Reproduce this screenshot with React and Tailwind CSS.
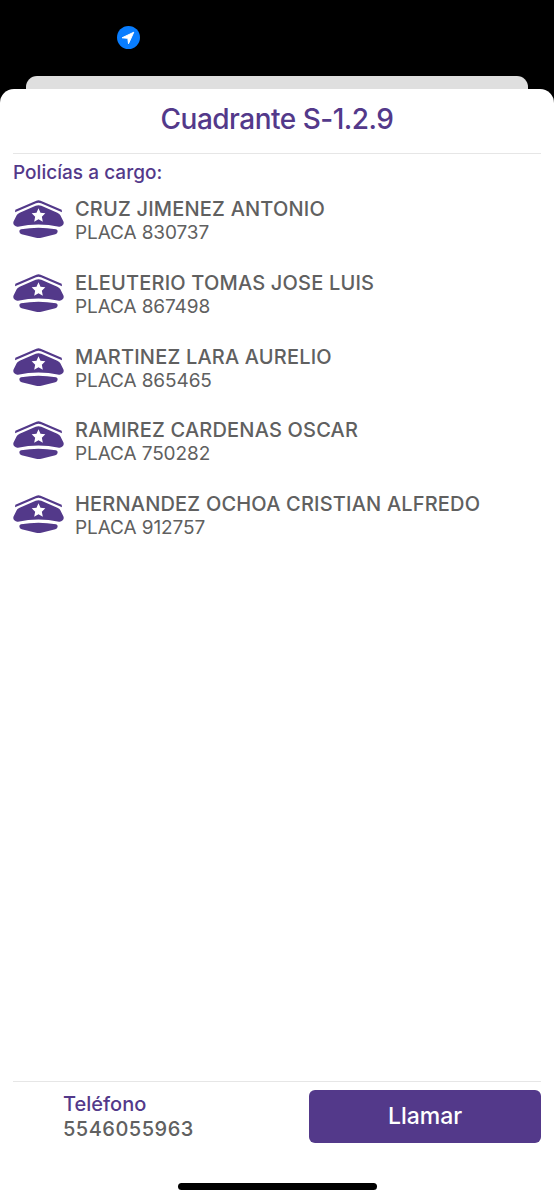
import React from 'react';

const officers = [
    { name: 'CRUZ JIMENEZ ANTONIO', badge: '830737' },
    { name: 'ELEUTERIO TOMAS JOSE LUIS', badge: '867498' },
    { name: 'MARTINEZ LARA AURELIO', badge: '865465' },
    { name: 'RAMIREZ CARDENAS OSCAR', badge: '750282' },
    { name: 'HERNANDEZ OCHOA CRISTIAN ALFREDO', badge: '912757' },
];

const PoliceCap = () => (
    <svg viewBox="0 0 153 114" className="w-[51px] h-[38px] shrink-0" fill="#53398a" aria-hidden="true">
        <path d="M6 37 L7 29 L70 2 Q76 -1 83 2 L146 29 L147 37 L84 10 Q76 7 69 10 Z" />
        <path d="M20 38 L68 17 Q76 14 85 17 L133 38 Q140 41 142 46 L151 64 Q154 71 149 76 Q144 81 138 80 Q76 67 15 80 Q9 81 4 76 Q-1 71 2 64 L11 46 Q13 41 20 38 Z" />
        <path d="M24 88 Q76 78 129 88 Q134 89 134 94 Q134 101 127 103 L85 113 Q77 115 69 113 L26 103 Q19 101 19 94 Q19 89 24 88 Z" />
        <path fill="#fff" d="M76.500 25 L82.500 38 L97 40 L86.500 50 L89.500 65 L76.500 58 L63.500 65 L66.500 50 L56 40 L70.500 38 Z" />
    </svg>
);

const LocationBadge = () => (
    <div className="w-[23px] h-[23px] rounded-full bg-[#087dff]">
        <svg viewBox="0 0 24 24" className="w-[23px] h-[23px]" fill="#fff" stroke="#fff" strokeWidth="1" strokeLinejoin="round" aria-hidden="true">
            <path d="M17.500 6.500 L5.300 12.300 L11.300 12.900 L12 18.500 Z" />
        </svg>
    </div>
);

const App = () => {
    return (
        <div className="w-full h-[1200px] flex flex-col bg-black overflow-hidden font-['Inter',sans-serif] text-[#606060]">
            <div className="h-[76px] shrink-0 pt-[26px] pl-[117px]">
                <LocationBadge />
            </div>

            <div className="h-[13px] shrink-0 mx-[26px] rounded-t-[11px] bg-[#dfdfdf]"></div>

            <main className="flex-1 flex flex-col px-[13px] bg-white rounded-t-[14px]">
                <h1 className="h-16 pb-1 flex items-center justify-center text-[28px] leading-none font-medium tracking-[-0.5px] text-[#53398a]">Cuadrante S-1.2.9</h1>
                <div className="h-px bg-[#e6e6e6]"></div>
                <h2 className="pt-1.5 text-[19px] leading-[26px] font-medium tracking-[0.03px] text-[#53398a]">Policías a cargo:</h2>

                <ul className="pt-3">
                    {officers.map((officer) => (
                        <li key={officer.badge} className="h-[73.75px] flex items-start">
                            <div className="pt-0.5">
                                <PoliceCap />
                            </div>
                            <div className="pl-[11px] whitespace-nowrap">
                                <p className="text-[20px] leading-6 font-medium tracking-[0.19px] -mt-px">{officer.name}</p>
                                <p className="text-[19px] leading-6 tracking-[-0.1px]">PLACA {officer.badge}</p>
                            </div>
                        </li>
                    ))}
                </ul>

                <footer className="mt-auto h-[119px] shrink-0 flex flex-col border-t border-[#e6e6e6]">
                    <div className="flex pt-2">
                        <div className="flex-1 pl-[50px] pt-0.5 font-medium">
                            <p className="text-[20px] leading-[25px] text-[#53398a]">Teléfono</p>
                            <p className="text-[20px] leading-[25px] tracking-[0.5px]">5546055963</p>
                        </div>
                        <button type="button" className="w-[232px] h-[53px] rounded-md bg-[#53398a] text-white text-[23px] font-medium">
                            Llamar
                        </button>
                    </div>
                    <div className="mt-auto mb-2.5 self-center w-[199px] h-[7px] rounded-full bg-black"></div>
                </footer>
            </main>
        </div>
    );
};

export default App;
